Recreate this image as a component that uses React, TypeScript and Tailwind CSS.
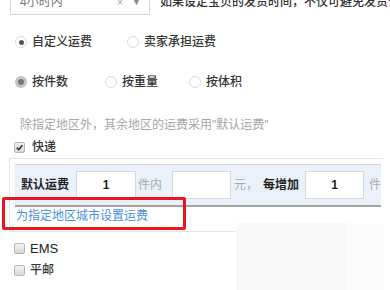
import React from 'react';

const font = { fontFamily: '"Liberation Sans", "Noto Sans CJK SC", sans-serif' };

function Radio({ checked, soft }: { checked?: boolean; soft?: boolean }) {
    if (checked && soft) {
        return (
            <span className="w-[12px] h-[12px] rounded-full bg-[#c4c4c4] flex items-center justify-center shrink-0">
                <span className="w-[6px] h-[6px] rounded-full bg-[#777]" />
            </span>
        );
    }
    return (
        <span className="w-[12px] h-[12px] rounded-full border border-[#dcdcdc] bg-white flex items-center justify-center shrink-0">
            {checked && <span className="w-[5px] h-[5px] rounded-full bg-[#555]" />}
        </span>
    );
}

function Check({ checked }: { checked?: boolean }) {
    return (
        <span className="w-[11px] h-[11px] rounded-[2px] border border-[#b5b5b5] bg-gradient-to-b from-[#f4f4f4] to-[#d8d8d8] flex items-center justify-center shrink-0">
            {checked && (
                <svg width="9" height="9" viewBox="0 0 10 10">
                    <path d="M2 5.2 L4.2 7.4 L8.2 2.4" fill="none" stroke="#333" strokeWidth="1.8" />
                </svg>
            )}
        </span>
    );
}

function Box({ value, w = 'w-[60px]' }: { value?: string; w?: string }) {
    return (
        <div className={`${w} h-[28px] bg-white border border-[#d9d9d9] flex items-center justify-center text-[12px] text-[#222] font-bold`}>
            {value}
        </div>
    );
}

export default function App() {
    return (
        <div className="relative w-[390px] h-[290px] overflow-hidden bg-white text-[12px] text-[#333] leading-none" style={font}>
            {/* top select row, cut off by the frame */}
            <div className="flex items-center mt-[-12px] h-[28px]">
                <div className="ml-[10px] w-[140px] shrink-0 h-[26px] border border-[#d6d6d6] flex items-center pl-[9px] pr-[8px] text-[#777] whitespace-nowrap">
                    <span className="flex-1">4小时内</span>
                    <span className="text-[#aaa] text-[11px] mr-[9px]">×</span>
                    <span className="text-[#888] text-[9px]">▼</span>
                </div>
                <span className="ml-[10px] whitespace-nowrap font-medium text-[#333]">如果设定宝贝的发货时间，不仅可避免发货咨询和纠纷</span>
            </div>

            {/* pricing mode */}
            <div className="flex items-center h-[20px] mt-[16px] pl-[15px]">
                <Radio checked />
                <span className="ml-[5px] font-medium">自定义运费</span>
                <span className="ml-[35px]"><Radio /></span>
                <span className="ml-[5px] font-medium">卖家承担运费</span>
            </div>

            {/* charge basis */}
            <div className="flex items-center h-[20px] mt-[20px] pl-[15px]">
                <Radio checked soft />
                <span className="ml-[5px] font-medium">按件数</span>
                <span className="ml-[37px]"><Radio /></span>
                <span className="ml-[5px] font-medium">按重量</span>
                <span className="ml-[31px]"><Radio /></span>
                <span className="ml-[5px] font-medium">按体积</span>
            </div>

            <div className="h-[20px] mt-[23px] pl-[20px] flex items-center text-[#a6a6a6] whitespace-nowrap">
                除指定地区外，其余地区的运费采用"默认运费"
            </div>

            <div className="flex items-center h-[20px] mt-[2px] pl-[14px]">
                <Check checked />
                <span className="ml-[7px] font-medium">快递</span>
            </div>

            {/* express panel */}
            <div className="mt-[1px] ml-[9px] w-[374px] border-t border-l border-b border-[#e6e6e6] pt-[5px] pl-[5px] h-[74px]">
                <div className="w-[366px] h-[43px] bg-[#eaf1fb] border-t border-[#d2d2d2] border-b-2 border-b-[#a3a3a3] flex items-center pl-[6px] whitespace-nowrap">
                    <span className="font-bold text-[#222]">默认运费</span>
                    <div className="ml-[7px]"><Box value="1" /></div>
                    <span className="ml-[2px] text-[#aaa]">件内</span>
                    <div className="ml-[10px]"><Box w="w-[59px]" /></div>
                    <span className="ml-[3px] text-[#aaa]">元，</span>
                    <span className="ml-[5px] font-bold text-[#222]">每增加</span>
                    <div className="ml-[6px]"><Box w="w-[59px]" value="1" /></div>
                    <span className="ml-[5px] text-[#aaa]">件</span>
                </div>
                <div className="h-[16px] mt-[1px] pl-[1px] flex items-center text-[#4a90e2] whitespace-nowrap">
                    为指定地区城市设置运费
                </div>
            </div>

            <div className="flex items-center h-[20px] mt-[6px] pl-[14px]">
                <Check />
                <span className="ml-[5px] text-[13px] text-[#222]">EMS</span>
            </div>
            <div className="flex items-center h-[20px] mt-[2px] pl-[14px]">
                <Check />
                <span className="ml-[5px] font-medium">平邮</span>
            </div>

            {/* annotation and faint overlay blocks */}
            <div className="absolute left-[2px] top-[197px] w-[184px] h-[33px] border-[3px] border-[#e8161e] rounded-[2px]" />
            <div className="absolute left-[236px] top-[223px] w-[111px] h-[67px] bg-[#f8f8f8]" />
            <div className="absolute left-[347px] top-[223px] w-[36px] h-[67px] bg-[#fcfcfc]" />
        </div>
    );
}
